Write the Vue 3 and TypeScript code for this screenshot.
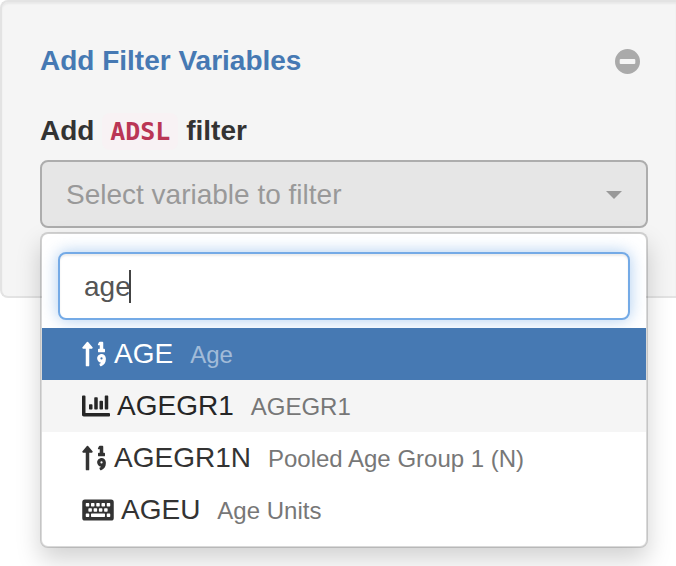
<script setup lang="ts">
import { computed, onMounted, ref } from 'vue'

type IconName = 'numeric' | 'chart' | 'keyboard'

interface Variable {
  name: string
  label: string
  icon: IconName
}

const icons: Record<IconName, { width: number; path: string }> = {
  numeric: {
    width: 448,
    path: 'M304 96h16v64h-16a16 16 0 0 0-16 16v32a16 16 0 0 0 16 16h96a16 16 0 0 0 16-16v-32a16 16 0 0 0-16-16h-16V48a16 16 0 0 0-16-16h-48a16 16 0 0 0-14.29 8.83l-16 32A16 16 0 0 0 304 96zm26.15 162.91a79 79 0 0 0-55 54.17c-14.25 51.05 21.21 97.77 68.85 102.53a84.07 84.07 0 0 1-20.85 12.91c-7.57 3.4-10.8 12.47-8.18 20.34l9.9 20c2.87 8.63 12.53 13.49 20.9 9.91 58-24.76 86.25-61.61 86.25-132V336c-.02-51.21-48.4-91.34-101.85-77.09zM352 356a20 20 0 1 1 20-20 20 20 0 0 1-20 20zM16 160h48v304a16 16 0 0 0 16 16h32a16 16 0 0 0 16-16V160h48c14.21 0 21.38-17.24 11.31-27.31l-80-96a16 16 0 0 0-22.62 0l-80 96C-5.35 142.74 1.78 160 16 160z',
  },
  chart: {
    width: 512,
    path: 'M332.8 320h38.4c6.4 0 12.8-6.4 12.8-12.8V172.8c0-6.4-6.4-12.8-12.8-12.8h-38.4c-6.4 0-12.8 6.4-12.8 12.8v134.4c0 6.4 6.4 12.8 12.8 12.8zm96 0h38.4c6.4 0 12.8-6.4 12.8-12.8V76.8c0-6.4-6.4-12.8-12.8-12.8h-38.4c-6.4 0-12.8 6.4-12.8 12.8v230.4c0 6.4 6.4 12.8 12.8 12.8zm-288 0h38.4c6.4 0 12.8-6.4 12.8-12.8v-70.4c0-6.4-6.4-12.8-12.8-12.8h-38.4c-6.4 0-12.8 6.4-12.8 12.8v70.4c0 6.4 6.4 12.8 12.8 12.8zm96 0h38.4c6.4 0 12.8-6.4 12.8-12.8V108.8c0-6.4-6.4-12.8-12.8-12.8h-38.4c-6.4 0-12.8 6.4-12.8 12.8v198.4c0 6.4 6.4 12.8 12.8 12.8zM496 384H64V80c0-8.84-7.16-16-16-16H16C7.16 64 0 71.16 0 80v336c0 17.67 14.33 32 32 32h464c8.84 0 16-7.16 16-16v-32c0-8.84-7.16-16-16-16z',
  },
  keyboard: {
    width: 576,
    path: 'M48 64h480a48 48 0 0 1 48 48v288a48 48 0 0 1-48 48H48a48 48 0 0 1-48-48V112a48 48 0 0 1 48-48zM76 128h40a12 12 0 0 1 12 12v40a12 12 0 0 1-12 12H76a12 12 0 0 1-12-12v-40a12 12 0 0 1 12-12zm96 0h40a12 12 0 0 1 12 12v40a12 12 0 0 1-12 12h-40a12 12 0 0 1-12-12v-40a12 12 0 0 1 12-12zm96 0h40a12 12 0 0 1 12 12v40a12 12 0 0 1-12 12h-40a12 12 0 0 1-12-12v-40a12 12 0 0 1 12-12zm96 0h40a12 12 0 0 1 12 12v40a12 12 0 0 1-12 12h-40a12 12 0 0 1-12-12v-40a12 12 0 0 1 12-12zm96 0h40a12 12 0 0 1 12 12v40a12 12 0 0 1-12 12h-40a12 12 0 0 1-12-12v-40a12 12 0 0 1 12-12zM124 224h40a12 12 0 0 1 12 12v40a12 12 0 0 1-12 12h-40a12 12 0 0 1-12-12v-40a12 12 0 0 1 12-12zm96 0h40a12 12 0 0 1 12 12v40a12 12 0 0 1-12 12h-40a12 12 0 0 1-12-12v-40a12 12 0 0 1 12-12zm96 0h40a12 12 0 0 1 12 12v40a12 12 0 0 1-12 12h-40a12 12 0 0 1-12-12v-40a12 12 0 0 1 12-12zm96 0h40a12 12 0 0 1 12 12v40a12 12 0 0 1-12 12h-40a12 12 0 0 1-12-12v-40a12 12 0 0 1 12-12zM76 320h40a12 12 0 0 1 12 12v40a12 12 0 0 1-12 12H76a12 12 0 0 1-12-12v-40a12 12 0 0 1 12-12zm96 0h232a12 12 0 0 1 12 12v40a12 12 0 0 1-12 12H172a12 12 0 0 1-12-12v-40a12 12 0 0 1 12-12zm288 0h40a12 12 0 0 1 12 12v40a12 12 0 0 1-12 12h-40a12 12 0 0 1-12-12v-40a12 12 0 0 1 12-12z',
  },
}

const variables: Variable[] = [
  { name: 'AGE', label: 'Age', icon: 'numeric' },
  { name: 'AGEGR1', label: 'AGEGR1', icon: 'chart' },
  { name: 'AGEGR1N', label: 'Pooled Age Group 1 (N)', icon: 'numeric' },
  { name: 'AGEU', label: 'Age Units', icon: 'keyboard' },
]

const query = ref('age')
const selected = ref('AGE')
const hovered = ref('AGEGR1')
const searchInput = ref<HTMLInputElement | null>(null)
const measure = ref<CanvasRenderingContext2D | null>(null)

const matches = computed(() => {
  const q = query.value.toLowerCase()
  return variables.filter((v) => (v.name + ' ' + v.label).toLowerCase().includes(q))
})

// The caret is drawn by hand so that it keeps the 2px weight and does not blink.
const textWidth = computed(() =>
  measure.value ? Math.round(measure.value.measureText(query.value).width) : 0,
)

onMounted(() => {
  const context = document.createElement('canvas').getContext('2d')
  if (context && searchInput.value) {
    const style = getComputedStyle(searchInput.value)
    context.font = `${style.fontSize} ${style.fontFamily}`
    measure.value = context
  }
})
</script>

<template>
  <main class="page">
    <section class="well">
      <header class="heading">
        <h1 class="title">Add Filter Variables</h1>
        <button class="collapse" type="button" aria-label="Collapse">
          <svg viewBox="0 0 24 24" aria-hidden="true">
            <path
              fill-rule="evenodd"
              d="M12 0a12 12 0 1 1 0 24a12 12 0 0 1 0-24zM5.5 9.5a1 1 0 0 0-1 1v3a1 1 0 0 0 1 1h13a1 1 0 0 0 1-1v-3a1 1 0 0 0-1-1z"
            />
          </svg>
        </button>
      </header>

      <label class="label" for="variable">Add <code class="code">ADSL</code> filter</label>

      <div class="picker">
        <button id="variable" class="toggle" type="button" aria-haspopup="listbox" aria-expanded="true">
          <span>Select variable to filter</span>
          <span class="arrow"></span>
        </button>

        <div class="menu">
          <div class="search">
            <input
              ref="searchInput"
              v-model="query"
              class="search-input"
              type="text"
              aria-label="Search"
              autocomplete="off"
              spellcheck="false"
            />
            <span class="caret-track">
              <span class="caret" :style="{ marginLeft: textWidth + 'px' }"></span>
            </span>
          </div>
          <ul class="options">
            <li v-for="v in matches" :key="v.name">
              <a
                href="#"
                class="option"
                :class="{ active: v.name === selected, hovered: v.name === hovered }"
                @click.prevent="selected = v.name"
                @mouseenter="hovered = v.name"
              >
                <svg class="icon" :class="v.icon" :viewBox="`0 0 ${icons[v.icon].width} 512`" aria-hidden="true">
                  <path fill-rule="evenodd" :d="icons[v.icon].path" />
                </svg>
                <span class="name">{{ v.name }}</span>
                <small class="desc">{{ v.label }}</small>
              </a>
            </li>
          </ul>
        </div>
      </div>
    </section>
  </main>
</template>

<style>
body {
  background: #fff;
}
</style>

<style scoped>
.page,
.page * {
  box-sizing: border-box;
}

.page {
  min-height: 100vh;
  font-family: 'Liberation Sans', Arial, sans-serif;
  font-size: 28px;
  line-height: 40px;
  color: #333;
}

.well {
  padding: 39px 28px 68px 38px;
  background: #f5f5f5;
  border: 2px solid #e3e3e3;
  border-right: 0;
  border-radius: 8px 0 0 8px;
  box-shadow: inset 0 2px 2px rgba(0, 0, 0, 0.05);
}

.heading {
  display: flex;
  align-items: center;
  justify-content: space-between;
  margin-bottom: 30px;
  padding-right: 8px;
}

.title {
  margin: 0;
  font-size: 28px;
  font-weight: 700;
  line-height: 40px;
  color: #4679b3;
}

.collapse {
  display: flex;
  padding: 0;
  background: none;
  border: 0;
  cursor: pointer;
}

.collapse svg {
  width: 25px;
  height: 25px;
  fill: #aaa;
}

.label {
  display: block;
  margin-bottom: 9px;
  font-weight: 700;
}

.code {
  padding: 4px 8px;
  font-family: 'DejaVu Sans Mono', monospace;
  font-size: 25px;
  line-height: 28px;
  color: #ba3655;
  background: #f8f2f4;
  border-radius: 8px;
}

.picker {
  position: relative;
}

.toggle {
  display: flex;
  align-items: center;
  justify-content: space-between;
  width: 100%;
  padding: 13px 24px 11px;
  font: inherit;
  color: #999;
  background: #e6e6e6;
  border: 2px solid #adadad;
  border-radius: 8px;
  cursor: pointer;
}

.arrow {
  border-top: 8px solid #999;
  border-right: 8px solid transparent;
  border-left: 8px solid transparent;
}

.menu {
  position: absolute;
  top: 100%;
  left: 0;
  right: 0;
  margin-top: 4px;
  padding-bottom: 10px;
  background: #fff;
  background-clip: padding-box;
  border: 2px solid rgba(0, 0, 0, 0.15);
  border-radius: 8px;
  box-shadow: 0 12px 24px rgba(0, 0, 0, 0.175);
}

.search {
  position: relative;
  padding: 18px 16px 8px;
}

.search-input {
  display: block;
  width: 100%;
  height: 68px;
  padding: 13px 24px 11px;
  font: inherit;
  color: #555;
  caret-color: transparent;
  background: #fff;
  border: 2px solid #74aae6;
  border-radius: 8px;
  outline: none;
  box-shadow:
    inset 0 2px 2px rgba(0, 0, 0, 0.075),
    0 0 16px rgba(116, 170, 230, 0.6);
}

.caret-track {
  position: absolute;
  inset: 18px 16px 8px;
  display: flex;
  align-items: center;
  padding: 0 24px;
  overflow: hidden;
  pointer-events: none;
}

.caret {
  width: 2px;
  height: 33px;
  background: #444;
}

.options {
  position: relative;
  margin: 0;
  padding: 0;
  list-style: none;
}

.option {
  display: flex;
  align-items: baseline;
  padding: 6px 40px;
  color: #333;
  text-decoration: none;
  white-space: nowrap;
}

.option.hovered {
  color: #262626;
  background: #f5f5f5;
}

.option.active {
  color: #fff;
  background: #4679b3;
}

.icon {
  flex: none;
  align-self: center;
  height: 28px;
  margin-right: 7px;
  fill: currentColor;
}

.icon.numeric {
  width: 25px;
}

.icon.chart {
  width: 28px;
}

.icon.keyboard {
  width: 32px;
}

.desc {
  margin-left: 17px;
  font-size: 24px;
  line-height: 28px;
  color: #777;
}

.option.active .desc {
  color: rgba(255, 255, 255, 0.5);
}
</style>
